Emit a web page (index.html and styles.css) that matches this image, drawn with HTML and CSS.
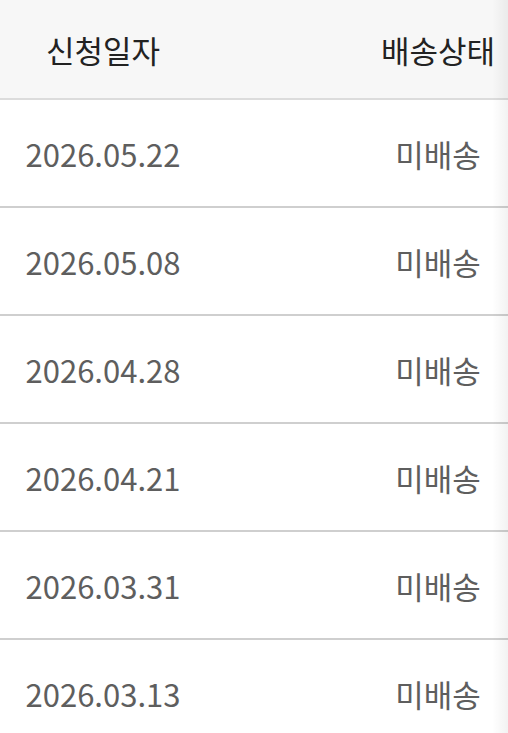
FILE: index.html
```html
<!DOCTYPE html>
<html lang="ko">
<head>
    <meta charset="UTF-8">
    <meta name="viewport" content="width=device-width, initial-scale=1.0">
    <title>배송 목록</title>
    <link rel="stylesheet" href="styles.css">
</head>
<body>
    <div class="table-wrap">
        <div class="row head">
            <div class="cell">신청일자</div>
            <div class="cell"></div>
            <div class="cell">배송상태</div>
        </div>
        <div class="row">
            <div class="cell date">2026.05.22</div>
            <div class="cell"></div>
            <div class="cell status">미배송</div>
        </div>
        <div class="row">
            <div class="cell date">2026.05.08</div>
            <div class="cell"></div>
            <div class="cell status">미배송</div>
        </div>
        <div class="row">
            <div class="cell date">2026.04.28</div>
            <div class="cell"></div>
            <div class="cell status">미배송</div>
        </div>
        <div class="row">
            <div class="cell date">2026.04.21</div>
            <div class="cell"></div>
            <div class="cell status">미배송</div>
        </div>
        <div class="row">
            <div class="cell date">2026.03.31</div>
            <div class="cell"></div>
            <div class="cell status">미배송</div>
        </div>
        <div class="row">
            <div class="cell date">2026.03.13</div>
            <div class="cell"></div>
            <div class="cell status">미배송</div>
        </div>
        <div class="edge-shadow"></div>
    </div>
</body>
</html>
```

FILE: styles.css
```css
body {
    margin: 0;
    padding: 0;
    background: #fff;
    font-family: "Noto Sans CJK KR", "Noto Sans", sans-serif;
}
.table-wrap {
    position: relative;
    overflow: hidden;
}
.row {
    display: grid;
    grid-template-columns: 206px 1fr 140px;
    align-items: center;
    height: 106px;
    border-bottom: 2px solid #cfcfcf;
}
.row.head {
    height: 98px;
    background-color: #f7f7f7;
    border-bottom-color: #dcdcdc;
    color: #222;
}
.cell {
    text-align: center;
    font-size: 31px;
    white-space: nowrap;
}
.date,
.status {
    color: #5e5e5e;
}
/* scroll hint on the right edge */
.edge-shadow {
    position: absolute;
    top: 0;
    right: 0;
    bottom: 0;
    width: 16px;
    background: linear-gradient(to right, rgba(0, 0, 0, 0), rgba(0, 0, 0, 0.05));
}
```
